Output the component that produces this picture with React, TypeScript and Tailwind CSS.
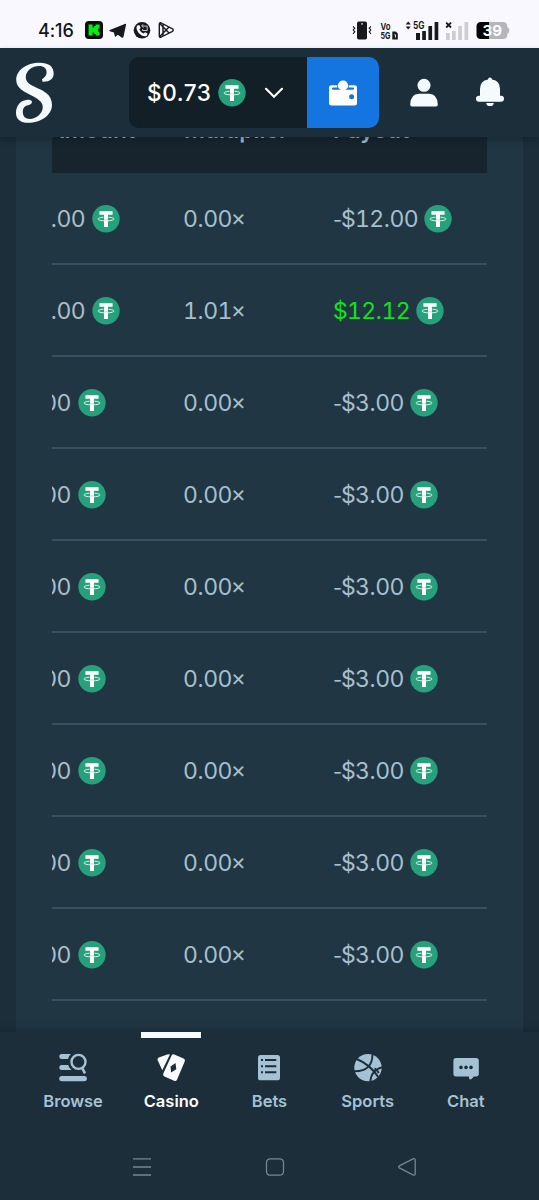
import React from "react";

function Tether({ className = "" }: { className?: string }) {
  return (
    <svg viewBox="0 0 28 28" className={`h-[28px] w-[28px] shrink-0 ${className}`}>
      <circle cx="14" cy="13.7" r="13.7" fill="#26a17b" />
      <path d="M7.400 6.200h13.200v3.500h-4.600v12.300h-4V9.700H7.400z" fill="#fff" />
      <path d="M11.500 12.200a8 1.900 0 1 0 5 0" fill="none" stroke="#e3f5ef" strokeWidth="1" />
      <path d="M12 14.700h4" stroke="#9fd6c4" strokeWidth="0.600" />
    </svg>
  );
}

function StatusBar() {
  return (
    <div className="flex h-12 shrink-0 items-start bg-[#f9f8ff] pl-[38px] pr-[29px] pt-[21px] text-[#15161a]">
      <span className="w-[46px] whitespace-nowrap font-['Inter',sans-serif] text-[18px] font-medium leading-[20px] tracking-[-0.1px]">
        4:16
      </span>
      <svg viewBox="0 0 18 18" className="ml-[1px] h-[18px] w-[18px]">
        <rect width="18" height="18" rx="3.800" fill="#0a0f0a" />
        <path d="M3.600 3.400h4v3.200h1.500V5h1.500V3.400h4v4h-1.400v3h1.400v4h-4v-1.500H9.100v-1.500H7.600v3h-4z" fill="#08ed19" />
      </svg>
      <svg viewBox="0 0 18 16" className="ml-[6px] mt-[2px] h-[16px] w-[18px]">
        <path d="M.8 6.900 15.800.9q1.500-.5 1.200 1.100l-2.500 11.800q-.4 1.700-1.900.7L8.800 11.700l-1.900 1.900q-.9.700-1.100-.5l-.9-3.700L.8 8.200q-1-.7 0-1.300ZM6.500 9.200l6.300-4.800-5 5.400z" fill="#17191d" />
      </svg>
      <svg viewBox="0 0 18 18" className="ml-[6px] h-[18px] w-[18px]">
        <circle cx="9" cy="9.300" r="8.300" fill="#17191d" />
        <path d="M4.200 4.500 6.300 4l1.300 3-1.300 1.500q1.400 3 4.200 4l1.600-1.300 2.400 1.300-.7 2.200q-2.200 1.300-5-.2-3.800-2-5.100-6-.6-2.500.5-4z" fill="#f9f8ff" />
        <path d="M10 3.300 8.700 5.100l1.800 1.300M9 5.100h5.200v4.400H9.600V8" fill="none" stroke="#c5c5cb" strokeWidth="1" />
      </svg>
      <svg viewBox="0 0 17 18" className="ml-[7px] h-[18px] w-[17px]" fill="none" stroke="#17191d" strokeWidth="1.400" strokeLinejoin="round">
        <path d="M1.300 3.200v11.600q0 2 2 1.200l11.200-5.700q1.500-1.300 0-2.500L3.300 2Q1.500 1.200 1.300 3.200ZM2 2.800l8.800 9M2 15.200l8.800-9M5 3.200v11.600" />
      </svg>
      <div className="flex-1" />
      <svg viewBox="0 0 20 19" className="h-[19px] w-[20px]">
        <rect x="5" y=".5" width="10" height="18" rx="1.800" fill="#17191d" />
        <circle cx="10" cy="2.900" r=".8" fill="#f9f8ff" />
        <path d="M1 5.500 2.800 7.200 1.200 9l1.600 1.800L1 12.800M19 5.500l-1.800 1.700L18.800 9l-1.600 1.800 1.800 2" fill="none" stroke="#17191d" strokeWidth="1.100" />
      </svg>
      <svg viewBox="0 0 19 19" className="ml-[8px] h-[19px] w-[19px]" fill="#17191d">
        <text x="0.500" y="8.800" fontFamily="Inter, sans-serif" fontSize="9.500" fontWeight="700" textLength="10" lengthAdjust="spacingAndGlyphs">Vo</text>
        <text x="0.500" y="18" fontFamily="Inter, sans-serif" fontSize="9.500" fontWeight="700" textLength="10" lengthAdjust="spacingAndGlyphs">5G</text>
        <path d="M12.300 10.500h3.400l2.100 2v6h-5.500z" />
        <path d="M14.300 13.800h1.200v2.700" fill="none" stroke="#f9f8ff" strokeWidth=".9" />
      </svg>
      <svg viewBox="0 0 35 20" className="ml-[6px] h-[20px] w-[35px] overflow-visible">
        <path d="M.6 3.500 3.200.6l2.600 2.900zM.6 5.500l2.600 2.900 2.600-2.900z" fill="#17191d" />
        <text x="8" y="8" fontFamily="Inter, sans-serif" fontSize="9.800" fontWeight="700" fill="#17191d" textLength="11.500" lengthAdjust="spacingAndGlyphs">5G</text>
        <path d="M11 12h4v7h-4zM17.200 10h3.700v9h-3.700zM23.400 5h3.700v14h-3.700zM29.600 1h3.700v18h-3.700z" fill="#17191d" />
      </svg>
      <svg viewBox="0 0 24 20" className="ml-[5px] h-[20px] w-[24px]">
        <path d="M1.200 1.600 6 6.500M6 1.600 1.200 6.500" stroke="#17191d" strokeWidth="1.800" />
        <path d="M1 12h3.700v7H1zM7 10h3.700v9H7zM13.200 5h3.700v14h-3.700zM19.500 1h3.700v18h-3.700z" fill="#ccccd1" />
      </svg>
      <svg viewBox="0 0 34 19" className="ml-[7px] h-[19px] w-[34px]">
        <path d="M5 1h8v17H5q-4.500 0-4.500-4.500v-8Q.5 1 5 1Z" fill="#050608" />
        <path d="M13 1h14q4.300 0 4.300 4.500v8Q31.300 18 27 18H13z" fill="#b6b5bc" />
        <path d="M31 6q2.600 1.200 2.400 3.500-.1 2.300-2.400 3.500z" fill="#b6b5bc" />
        <text x="16.200" y="15" textAnchor="middle" fontFamily="Inter, sans-serif" fontSize="15" fontWeight="700" fill="#fff">39</text>
      </svg>
    </div>
  );
}

function Header() {
  return (
    <header className="z-10 flex h-[89px] shrink-0 items-start bg-[#1b2e39] pl-[14px] pr-[35px] pt-[9px] shadow-[0_3px_6px_rgba(8,20,28,0.35)]">
      <svg viewBox="0 0 42 66" className="mt-[3px] h-[66px] w-[42px]">
        <path
          d="M28.500 21.700C35.500 22 39.700 19 39.700 13.500C39.700 6 34 2.700 26 2.700C12 2.700 2.200 10.500 2.200 19.800C2.200 29 11 32 18.500 36C25 39.500 29.300 42.500 28.700 48C28.100 54 22 58.900 16 58.900C11 58.900 8.600 56 8.800 51.500C9 47.500 11.500 45.500 14 45.300C16.500 45 18 43.500 18 41.500C17.500 40.200 15 39.600 12.500 39.900C6 40.600 2 46 2 53C2 59.500 7 62.800 14 62.800C27 62.800 38 55 38 45C38 34.500 30 31 22.500 27.700C16 24.800 11.800 22.300 11.800 17.300C11.800 10.500 18.500 6 25 6C30 6 32.700 8.500 32.600 12.500C32.500 16 30.300 17.500 28 19.300Z"
          fill="#f4f9fd"
        />
      </svg>
      <div className="ml-[73px] flex h-[71px] w-[250px] overflow-hidden rounded-[10px] bg-[#121f27]">
        <div className="flex w-[178px] items-center pl-[18px] text-white">
          <span className="w-[71px] whitespace-nowrap font-['Inter',sans-serif] text-[22.5px] font-medium tracking-[0.6px]">$0.73</span>
          <Tether />
          <svg viewBox="0 0 20 14" className="ml-[18px] h-[14px] w-[20px]">
            <path d="m2 2.800 8 8 8-8" fill="none" stroke="#fff" strokeWidth="2.200" strokeLinecap="round" />
          </svg>
        </div>
        <div className="flex flex-1 items-center justify-center bg-[#1475e1]">
          <svg viewBox="0 0 28 28" className="h-[28px] w-[28px]">
            <path d="M2.500 6.200h23q2.500 0 2.500 2.500V24q0 2.500-2.500 2.500H2.500Q0 26.500 0 24V8.700q0-2.500 2.500-2.500Z" fill="#fff" />
            <path d="M4 8.500h20a1.100 1.100 0 0 1 0 2.200H4a1.100 1.100 0 0 1 0-2.200Z" fill="#1475e1" />
            <path d="M8.300 5.500h11.400v4H8.300z" fill="#1475e1" />
            <circle cx="14" cy="6.500" r="5.100" fill="#fff" />
            <circle cx="22.600" cy="17.700" r="2.500" fill="#1475e1" />
          </svg>
        </div>
      </div>
      <svg viewBox="0 0 28 29" className="ml-[31px] mt-[21px] h-[29px] w-[28px]" fill="#f5fafe">
        <circle cx="14" cy="7.300" r="6.500" />
        <path d="M.2 26.500Q.5 15.700 9 15.700h10q8.500 0 8.800 10.800 0 2-1.800 2H2q-1.800 0-1.800-2Z" />
      </svg>
      <svg viewBox="0 0 28 30" className="ml-[37.5px] mt-[20px] h-[30px] w-[28px]" fill="#f5fafe">
        <path d="M12 2.400a2 2 0 0 1 4 0q8 1.300 8 9.500v6.800h1q3 0 3 3t-3 3H3q-3 0-3-3t3-3h1v-6.800q0-8.200 8-9.500ZM10.200 25.900h7.600q-.5 3.200-3.800 3.200t-3.800-3.200Z" />
      </svg>
    </header>
  );
}

type Bet = { amount: string; multiplier: string; payout: string; win?: boolean };

const bets: Bet[] = [
  { amount: "$12.00", multiplier: "0.00×", payout: "-$12.00" },
  { amount: "$12.00", multiplier: "1.01×", payout: "$12.12", win: true },
  ...Array.from({ length: 7 }, () => ({ amount: "$3.00", multiplier: "0.00×", payout: "-$3.00" })),
];

const signClasses: Record<string, string> = {
  "-": "inline-block w-[8px] text-[20px]",
  ".": "inline-block w-[6px] text-center",
  "×": "relative -top-px -ml-px inline-block w-[13px] text-center",
};

function Figure({ value, className = "" }: { value: string; className?: string }) {
  return (
    <span className={`whitespace-nowrap tabular-nums ${className}`}>
      {value.split(/([-.×])/).map((part, i) =>
        signClasses[part] ? (
          <span key={i} className={`proportional-nums ${signClasses[part]}`}>
            {part}
          </span>
        ) : (
          part
        ),
      )}
    </span>
  );
}

function BetTable() {
  return (
    <main className="flex min-h-0 flex-1 overflow-hidden bg-[#1b2e39] px-4">
      <div className="-mt-[36px] flex-1 bg-[#213643] px-9">
        <div className="overflow-hidden">
          <div className="-ml-[43px] grid h-[72px] grid-cols-[175px_149px_154px] items-start bg-[#17242d] pt-[15px] font-['Inter',sans-serif] text-[22.8px] font-semibold leading-[28px] text-[#a9c2d2]">
            <span className="pl-[39px]">Amount</span>
            <span>Multiplier</span>
            <span>Payout</span>
          </div>
          {bets.map((bet, i) => (
            <div
              key={i}
              className="-ml-[43px] grid h-[92px] grid-cols-[175px_149px_154px] items-center border-b-2 border-[#385060] pt-[2px] font-['Inter',sans-serif] text-[23px] tracking-[-0.7px] text-[#a7bfcd]"
            >
              <div className="-ml-px flex items-center gap-[7px]">
                <Figure value={bet.amount} />
                <Tether />
              </div>
              <Figure value={bet.multiplier} className="-ml-px" />
              <div className="flex items-center gap-[6.5px]">
                <Figure value={bet.payout} className={bet.win ? "text-[#0fe41b]" : ""} />
                <Tether />
              </div>
            </div>
          ))}
        </div>
      </div>
    </main>
  );
}

const iconClass = "h-[30px] w-[30px]";

const tabs = [
  {
    label: "Browse",
    icon: (
      <svg viewBox="0 0 30 30" className={iconClass} fill="currentColor">
        <path d="M3.800 1h9.200q-2.500 2-3 5H3.800a2.500 2.500 0 0 1 0-5ZM3.800 12h6.400q.8 2.800 3.300 5H3.800a2.500 2.500 0 0 1 0-5ZM3.800 23h22.500a2.600 2.600 0 0 1 0 5.200H3.800a2.600 2.600 0 0 1 0-5.200Z" />
        <circle cx="20.500" cy="8.900" r="7" fill="none" stroke="currentColor" strokeWidth="2.400" />
        <path d="m24 14.500 3 5.800" stroke="currentColor" strokeWidth="2.600" />
      </svg>
    ),
  },
  {
    label: "Casino",
    icon: (
      <svg viewBox="0 0 30 30" className={iconClass} fill="currentColor">
        <path d="m2.900 4.600 8.300-3q1.800-.6 2.700-.2L6.300 17.300 1.700 7.200q-.8-1.800 1.200-2.600Z" />
        <path fillRule="evenodd" d="m18.200 1.400 9.400 4q2 .9 1.200 2.800L21 26.700q-.9 2-2.900 1.100l-9.700-4.300q-2-.9-1.100-2.900L15.600 2.400q.8-1.700 2.600-1Zm1.300 8.600-5 3.600.6 5.900 5.200-3.300z" />
      </svg>
    ),
  },
  {
    label: "Bets",
    icon: (
      <svg viewBox="0 0 30 30" className={iconClass}>
        <rect x="4" y="2" width="22" height="25.300" rx="2.600" fill="currentColor" />
        <path d="M7 7.100h2m2 0h11.300M7 13.200h2m2 0h11.300M7 19.300h2m2 0h11.300" stroke="#1b2e39" strokeWidth="2" />
      </svg>
    ),
  },
  {
    label: "Sports",
    icon: (
      <svg viewBox="0 0 30 30" className={iconClass}>
        <circle cx="15" cy="14.600" r="13.700" fill="currentColor" />
        <path d="M2.600 5.500Q17.500 11.500 26 25M1.200 18.200Q20 18.500 19.500 0M29 14.300Q18 17 17.300 29M21.500 15.500q3 1.200 4.200 4.600" fill="none" stroke="#1b2e39" strokeWidth="1.900" />
      </svg>
    ),
  },
  {
    label: "Chat",
    icon: (
      <svg viewBox="0 0 30 30" className={iconClass}>
        <path d="M5 5h20q2.800 0 2.800 2.500v13.300q0 2.600-2.800 2.600h-2.200q-1.800 2.800-4.200 3.200-.7-1.500-.6-3.200H5q-2.600 0-2.600-2.600V7.500Q2.400 5 5 5Z" fill="currentColor" />
        <g fill="#1b2e39">
          <circle cx="10" cy="14.400" r="1.800" />
          <circle cx="15" cy="14.400" r="1.800" />
          <circle cx="20" cy="14.400" r="1.800" />
        </g>
      </svg>
    ),
  },
];

function BottomNav() {
  return (
    <nav className="z-10 flex h-[168px] shrink-0 flex-col bg-[#1b2e39] shadow-[0_-3px_6px_rgba(8,20,28,0.25)]">
      <div className="mx-6 grid h-[110px] w-[491px] grid-cols-5">
        {tabs.map((tab) => {
          const active = tab.label === "Casino";
          return (
            <div key={tab.label} className={`flex flex-col items-center ${active ? "text-[#f8fcff]" : "text-[#a5c2d5]"}`}>
              <div className={`mb-[15px] h-[6px] w-[60px] ${active ? "bg-[#f8fcff]" : ""}`} />
              {tab.icon}
              <span className="mt-[6px] font-['Inter',sans-serif] text-[16.5px] font-semibold leading-[24px]">{tab.label}</span>
            </div>
          );
        })}
      </div>
      <div className="flex justify-between pl-[131px] pr-[121px] pt-[14px]">
        {[
          "M2 2.8h18M2 11h18M2 19h18",
          "M6.500 2.800h9q4 0 4 4v8.400q0 4-4 4h-9q-4 0-4-4V6.800q0-4 4-4Z",
          "M17 2.900 3.800 9.600q-2.300 1.300 0 2.600L17 18.900q2.200.8 2.200-1.500V4.400q0-2.300-2.200-1.500Z",
        ].map((d) => (
          <svg key={d} viewBox="0 0 22 22" className="h-[22px] w-[22px]" fill="none" stroke="#78858d" strokeWidth="1.300">
            <path d={d} />
          </svg>
        ))}
      </div>
    </nav>
  );
}

export default function App() {
  return (
    <div className="flex h-[1200px] w-[539px] flex-col overflow-hidden">
      <StatusBar />
      <Header />
      <BetTable />
      <BottomNav />
    </div>
  );
}
